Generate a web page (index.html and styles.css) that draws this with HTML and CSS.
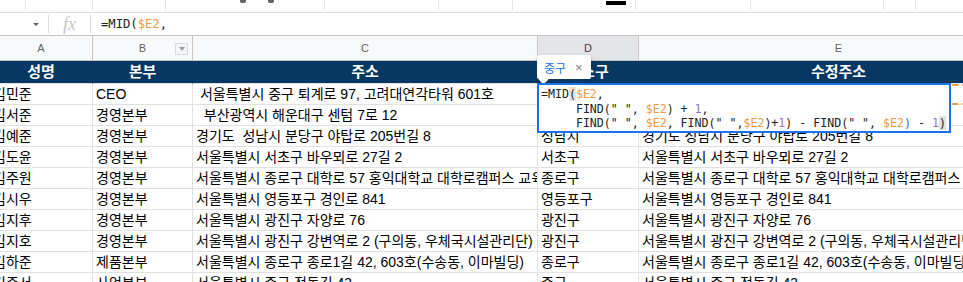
FILE: index.html
```html
<!DOCTYPE html>
<html lang="ko">
<head>
    <meta charset="UTF-8">
    <title>주소 정리</title>
    <link rel="stylesheet" href="styles.css">
</head>
<body>
    <div class="toolbar">
        <div class="seg"></div>
        <div class="seg"></div>
        <div class="seg"></div>
        <div class="seg icons"><span class="nub"></span><span class="nub"></span></div>
        <div class="seg"></div>
        <div class="seg"></div>
        <div class="seg color"><span class="swatch"></span></div>
        <div class="seg"></div>
        <div class="seg"></div>
        <div class="seg"></div>
        <div class="seg last"></div>
    </div>

    <div class="formula-bar">
        <div class="namebox"><span class="caret"></span></div>
        <div class="divider"></div>
        <div class="fx">fx</div>
        <div class="divider"></div>
        <div class="formula-text">=MID(<span class="ref">$E2</span>,</div>
    </div>

    <div class="sheet">
        <div class="row col-heads">
            <div class="cell">A</div>
            <div class="cell">B<span class="filter-btn"></span></div>
            <div class="cell">C</div>
            <div class="cell selected">D</div>
            <div class="cell">E</div>
        </div>
        <div class="row head">
            <div class="cell">성명</div>
            <div class="cell">본부</div>
            <div class="cell">주소</div>
            <div class="cell">주소구</div>
            <div class="cell">수정주소</div>
        </div>
        <div class="row">
            <div class="cell">김민준</div>
            <div class="cell">CEO</div>
            <div class="cell"> 서울특별시 중구 퇴계로 97, 고려대연각타워 601호</div>
            <div class="cell">중구</div>
            <div class="cell ref-cell">서울특별시 중구 퇴계로 97, 고려대연각타워 601호</div>
        </div>
        <div class="row">
            <div class="cell">김서준</div>
            <div class="cell">경영본부</div>
            <div class="cell">  부산광역시 해운대구 센텀 7로 12</div>
            <div class="cell">해운대구</div>
            <div class="cell">부산광역시 해운대구 센텀 7로 12</div>
        </div>
        <div class="row">
            <div class="cell">김예준</div>
            <div class="cell">경영본부</div>
            <div class="cell">경기도  성남시 분당구 야탑로 205번길 8</div>
            <div class="cell">성남시</div>
            <div class="cell">경기도 성남시 분당구 야탑로 205번길 8</div>
        </div>
        <div class="row">
            <div class="cell">김도윤</div>
            <div class="cell">경영본부</div>
            <div class="cell">서울특별시 서초구 바우뫼로 27길 2</div>
            <div class="cell">서초구</div>
            <div class="cell">서울특별시 서초구 바우뫼로 27길 2</div>
        </div>
        <div class="row">
            <div class="cell">김주원</div>
            <div class="cell">경영본부</div>
            <div class="cell">서울특별시 종로구 대학로 57 홍익대학교 대학로캠퍼스 교육동</div>
            <div class="cell">종로구</div>
            <div class="cell">서울특별시 종로구 대학로 57 홍익대학교 대학로캠퍼스 교육동</div>
        </div>
        <div class="row">
            <div class="cell">김시우</div>
            <div class="cell">경영본부</div>
            <div class="cell">서울특별시 영등포구 경인로 841</div>
            <div class="cell">영등포구</div>
            <div class="cell">서울특별시 영등포구 경인로 841</div>
        </div>
        <div class="row">
            <div class="cell">김지후</div>
            <div class="cell">경영본부</div>
            <div class="cell">서울특별시 광진구 자양로 76</div>
            <div class="cell">광진구</div>
            <div class="cell">서울특별시 광진구 자양로 76</div>
        </div>
        <div class="row">
            <div class="cell">김지호</div>
            <div class="cell">경영본부</div>
            <div class="cell">서울특별시 광진구 강변역로 2 (구의동, 우체국시설관리단)</div>
            <div class="cell">광진구</div>
            <div class="cell">서울특별시 광진구 강변역로 2 (구의동, 우체국시설관리단)</div>
        </div>
        <div class="row">
            <div class="cell">김하준</div>
            <div class="cell">제품본부</div>
            <div class="cell">서울특별시 종로구 종로1길 42, 603호(수송동, 이마빌딩)</div>
            <div class="cell">종로구</div>
            <div class="cell">서울특별시 종로구 종로1길 42, 603호(수송동, 이마빌딩)</div>
        </div>
        <div class="row">
            <div class="cell">김준서</div>
            <div class="cell">사업본부</div>
            <div class="cell">서울특별시 중구 정동길 43</div>
            <div class="cell">중구</div>
            <div class="cell">서울특별시 중구 정동길 43</div>
        </div>
    </div>

    <div class="hint"><span>중구</span><span class="close">×</span></div>

    <div class="editor">=MID<span class="paren">(</span><span class="ref">$E2</span>,
     FIND(" ", <span class="ref">$E2</span>) + <span class="num">1</span>,
     FIND(" ", <span class="ref">$E2</span>, FIND(" ",<span class="ref">$E2</span>)+<span class="num">1</span>) - FIND(" ", <span class="ref">$E2</span><span class="blue">)</span> - <span class="num">1</span><span class="paren">)</span></div>
</body>
</html>
```

FILE: styles.css
```css
* {
    box-sizing: border-box;
}
body {
    margin: 0;
    width: 963px;
    height: 282px;
    overflow: hidden;
    position: relative;
    background: #fff;
    font-family: "Liberation Sans", "Noto Sans CJK KR", sans-serif;
}

/* what is left of the toolbar */
.toolbar {
    display: grid;
    grid-template-columns: 26px 67px 73px 159px 114px 74px 123px 115px 133px 32px 1fr;
    height: 13px;
    border-bottom: 1px solid #e0e0e0;
}
.toolbar .seg {
    height: 10px;
    border-right: 1px solid #e3e3e3;
    display: flex;
    align-items: flex-start;
}
.toolbar .last {
    border-right: none;
}
.toolbar .icons {
    padding-left: 74px;
    gap: 22px;
}
.nub {
    width: 6px;
    height: 3px;
    background: #5f6368;
    border-radius: 0 0 2px 2px;
}
.toolbar .color {
    padding-left: 93px;
    padding-top: 1px;
}
.swatch {
    width: 20px;
    height: 4px;
    background: #000;
}

/* formula bar */
.formula-bar {
    display: flex;
    align-items: center;
    height: 23px;
    border-bottom: 1px solid #c7c7c7;
}
.namebox {
    width: 48px;
    display: flex;
    justify-content: flex-end;
    padding-right: 9px;
}
.caret {
    width: 0;
    height: 0;
    border-left: 3px solid transparent;
    border-right: 3px solid transparent;
    border-top: 3px solid #5f6368;
}
.divider {
    width: 1px;
    height: 18px;
    background: #dadce0;
}
.fx {
    width: 41px;
    text-align: center;
    font-family: "Liberation Serif", serif;
    font-style: italic;
    font-size: 18px;
    color: #c4c7c5;
    line-height: 20px;
}
.formula-text {
    padding-left: 10px;
    font-family: "DejaVu Sans Mono", monospace;
    font-size: 12.2px;
    color: #202124;
}
.ref {
    color: #f29a45;
}

/* grid */
.sheet {
    margin-left: -10px;
}
.row {
    display: grid;
    grid-template-columns: 103px 100px 345px 101px 400px;
    height: 21px;
}
.cell {
    border-right: 1px solid #e2e2e2;
    border-bottom: 1px solid #e2e2e2;
    padding: 0 3px;
    font-size: 14px;
    line-height: 20px;
    white-space: pre;
    overflow: hidden;
    color: #000;
}
.ref-cell {
    outline: 2px dashed #f29a45;
    outline-offset: -2px;
}

.col-heads {
    height: 25px;
}
.col-heads .cell {
    position: relative;
    background: #f8f9fa;
    border-right-color: #c7c7c7;
    border-bottom-color: #c0c0c0;
    text-align: center;
    font-size: 11px;
    line-height: 24px;
    color: #5f6368;
}
.col-heads .selected {
    background: #e3e5e8;
    color: #3c4043;
}
.filter-btn {
    position: absolute;
    right: 4px;
    top: 7px;
    width: 13px;
    height: 12px;
    border: 1px solid #dadce0;
    background: #f4f5f6;
    display: flex;
    align-items: center;
    justify-content: center;
}
.filter-btn::after {
    content: "";
    border-left: 3px solid transparent;
    border-right: 3px solid transparent;
    border-top: 4px solid #9aa0a6;
}

.head {
    height: 23px;
}
.head .cell {
    background: #073763;
    border-right-color: #073763;
    text-align: center;
    color: #fff;
    font-weight: bold;
    font-size: 15px;
    line-height: 22px;
}

/* formula preview and in-cell editor */
.hint {
    position: absolute;
    left: 537px;
    top: 55px;
    width: 54px;
    height: 24px;
    background: #fff;
    border-radius: 2px;
    box-shadow: 0 1px 3px rgba(60, 64, 67, 0.35);
    display: flex;
    align-items: center;
    gap: 9px;
    padding-left: 7px;
    font-family: "Noto Sans CJK KR", sans-serif;
    font-size: 12px;
    color: #1a73e8;
}
.hint::after {
    content: "";
    position: absolute;
    left: 3px;
    bottom: -4px;
    width: 7px;
    height: 7px;
    background: #fff;
    transform: rotate(45deg);
    box-shadow: 1px 1px 1px rgba(60, 64, 67, 0.25);
}
.hint .close {
    color: #80868b;
    font-family: "Liberation Sans", sans-serif;
    font-size: 13px;
}

.editor {
    position: absolute;
    left: 537px;
    top: 83px;
    width: 414px;
    height: 50px;
    border: 2px solid #1a73e8;
    background: #fff;
    padding: 2px;
    font-family: "DejaVu Sans Mono", monospace;
    font-size: 11.6px;
    line-height: 14.5px;
    white-space: pre;
    color: #222;
}
.paren {
    background: #e3e3e3;
}
.num {
    color: #9a72d6;
}
.blue {
    color: #1a73e8;
}
```
